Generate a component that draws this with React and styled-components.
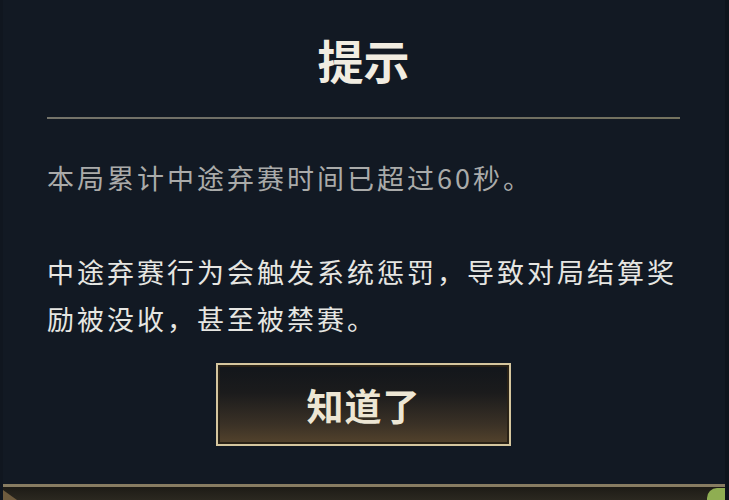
import React from 'react'
import styled, { createGlobalStyle } from 'styled-components'

const GlobalStyle = createGlobalStyle`
    html, body {
        margin: 0;
        padding: 0;
        background: #121923;
    }
`;

const StyledPage = styled.div`
    width: 729px;
    height: 500px;
    display: flex;
    flex-direction: column;
    background: #121923;
    font-family: "Noto Sans CJK SC", "Noto Sans", sans-serif;
    box-sizing: border-box;
    border-right: 4px solid #0e141c;
    border-left: 3px solid #10161f;
    overflow: hidden;
`;

const StyledPanel = styled.div`
    flex: 1;
    display: flex;
    flex-direction: column;
    padding: 29px 45px 0 44px;
`;

const StyledTitle = styled.h1`
    margin: 0;
    height: 60px;
    line-height: 60px;
    font-size: 46px;
    font-weight: 700;
    text-align: center;
    color: #f1ece1;
`;

const StyledDivider = styled.div`
    margin-top: 28px;
    height: 2px;
    background: linear-gradient(90deg, #75746a, #6a6a63 50%, #75735f);
`;

const StyledParagraph = styled.p`
    margin: 0;
    font-size: 27px;
    letter-spacing: 3px;
    line-height: 47px;
    white-space: nowrap;
    color: ${props => (props.muted ? '#aaabaa' : '#e6e6e2')};
    margin-top: ${props => props.gap || '0'};
`;

const StyledButtonRow = styled.div`
    display: flex;
    justify-content: center;
    margin-top: 21px;
`;

const StyledButton = styled.button`
    width: 295px;
    height: 83px;
    box-sizing: border-box;
    border: 2px solid #d5c69e;
    box-shadow: inset 0 0 0 2px #2a2216;
    background: linear-gradient(180deg, #12161b 0%, #1b1b1c 35%, #3a3126 75%, #54432c 100%);
    color: #ede6d4;
    font-family: "Noto Sans CJK SC", "Noto Sans", sans-serif;
    font-size: 37px;
    font-weight: 700;
    letter-spacing: 1px;
    cursor: pointer;
    padding: 0;
`;

const StyledFooter = styled.div`
    position: relative;
    height: 13px;
    border-top: 3px solid #877c62;
    background: linear-gradient(180deg, #1d1b16, #2b2820);

    &::before {
        content: '';
        position: absolute;
        left: 0;
        bottom: 0;
        width: 0;
        height: 0;
        border-left: 14px solid #6e5b3e;
        border-top: 10px solid transparent;
    }

    &::after {
        content: '';
        position: absolute;
        right: -4px;
        bottom: -4px;
        width: 22px;
        height: 16px;
        border-radius: 10px 0 0 0;
        background: #8fae52;
    }
`;

const App = () => {
    return (
        <StyledPage>
            <GlobalStyle />
            <StyledPanel>
                <StyledTitle>提示</StyledTitle>
                <StyledDivider />
                <StyledParagraph muted gap="35px">
                    本局累计中途弃赛时间已超过60秒。
                </StyledParagraph>
                <StyledParagraph gap="47px">
                    中途弃赛行为会触发系统惩罚，导致对局结算奖
                    <br />
                    励被没收，甚至被禁赛。
                </StyledParagraph>
                <StyledButtonRow>
                    <StyledButton>知道了</StyledButton>
                </StyledButtonRow>
            </StyledPanel>
            <StyledFooter />
        </StyledPage>
    )
};

export default App;
